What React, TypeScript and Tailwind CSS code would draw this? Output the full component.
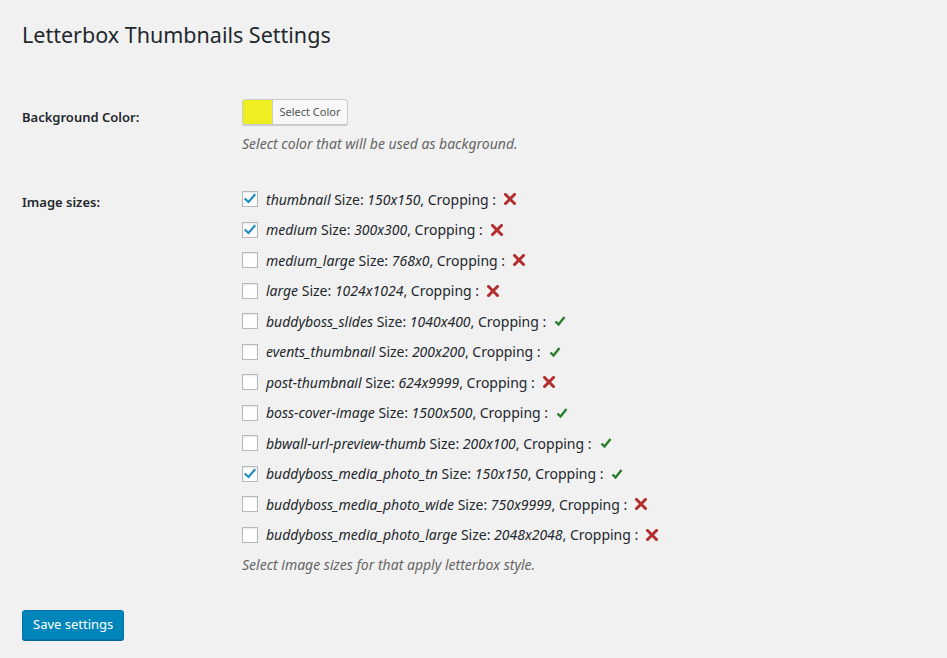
import React from "react";

type Row = { name: string; size: string; checked: boolean; crop: boolean };

const rows: Row[] = [
  { name: "thumbnail", size: "150x150", checked: true, crop: false },
  { name: "medium", size: "300x300", checked: true, crop: false },
  { name: "medium_large", size: "768x0", checked: false, crop: false },
  { name: "large", size: "1024x1024", checked: false, crop: false },
  { name: "buddyboss_slides", size: "1040x400", checked: false, crop: true },
  { name: "events_thumbnail", size: "200x200", checked: false, crop: true },
  { name: "post-thumbnail", size: "624x9999", checked: false, crop: false },
  { name: "boss-cover-image", size: "1500x500", checked: false, crop: true },
  { name: "bbwall-url-preview-thumb", size: "200x100", checked: false, crop: true },
  { name: "buddyboss_media_photo_tn", size: "150x150", checked: true, crop: true },
  { name: "buddyboss_media_photo_wide", size: "750x9999", checked: false, crop: false },
  { name: "buddyboss_media_photo_large", size: "2048x2048", checked: false, crop: false },
];

function Checkbox({ checked }: { checked: boolean }) {
  return (
    <span className="relative w-4 h-4 shrink-0 bg-white border border-[#b4b9be] shadow-[inset_0_1px_2px_rgba(0,0,0,0.1)]">
      {checked && (
        <svg viewBox="0 0 16 16" className="absolute -left-[1px] -top-[1px] w-4 h-4">
          <path d="M3.5 8.2 L6.5 11 L12.5 4" fill="none" stroke="#1e8cbe" strokeWidth="2.2" strokeLinecap="square" />
        </svg>
      )}
    </span>
  );
}

function Cross() {
  return (
    <svg viewBox="0 0 12 12" className="w-3 h-3 ml-2">
      <path d="M1.5 1.5 L10.5 10.5 M10.5 1.5 L1.5 10.5" stroke="#b32d2e" strokeWidth="3" strokeLinecap="square" />
    </svg>
  );
}

function Tick() {
  return (
    <svg viewBox="0 0 12 12" className="w-3 h-3 ml-2">
      <path d="M1.5 6.5 L4.5 9.5 L10.5 2" fill="none" stroke="#2a7d2a" strokeWidth="2.4" />
    </svg>
  );
}

export default function App() {
  return (
    <div
      className="min-h-[658px] w-[947px] bg-[#f1f1f1] text-[#23282d]"
      style={{ fontFamily: '"Noto Sans", "Open Sans", sans-serif' }}
    >
      <div className="pl-[22px]">
        <h1 className="pt-[20px] text-[21.5px] leading-[29px] font-normal">Letterbox Thumbnails Settings</h1>

        <div className="mt-[50px] flex">
          <div className="w-[220px] pt-[9px] text-[13px] font-semibold">Background Color:</div>
          <div>
            <div className="flex h-[26px] w-[106px] border border-[#cccccc] rounded-[3px] bg-[#f7f7f7] shadow-[0_1px_0_#ccc] overflow-hidden">
              <span className="w-[30px] bg-[#eeee22] border-r border-[#ccc]" />
              <span className="flex-1 flex items-center justify-center text-[11px] text-[#555]">Select Color</span>
            </div>
            <p className="mt-[9px] text-[14px] leading-[20px] italic text-[#666]">Select color that will be used as background.</p>
          </div>
        </div>

        <div className="mt-[30px] flex">
          <div className="w-[220px] pt-[9px] text-[13px] font-semibold">Image sizes:</div>
          <div>
            <div className="flex flex-col">
              {rows.map((r) => (
                <div key={r.name} className="h-[30.5px] flex items-center text-[14px]">
                  <Checkbox checked={r.checked} />
                  <span className="ml-2 whitespace-pre">
                    <i>{r.name}</i> Size: <i>{r.size}</i>, Cropping :
                  </span>
                  {r.crop ? <Tick /> : <Cross />}
                </div>
              ))}
            </div>
            <p className="mt-[5px] text-[14px] leading-[20px] italic text-[#666]">Select image sizes for that apply letterbox style.</p>
          </div>
        </div>

        <button className="mt-[35px] h-[30px] px-[10px] rounded-[3px] bg-[#0085ba] border border-[#0073aa] shadow-[0_1px_0_#006799] text-white text-[13px]">
          Save settings
        </button>
      </div>
    </div>
  );
}
